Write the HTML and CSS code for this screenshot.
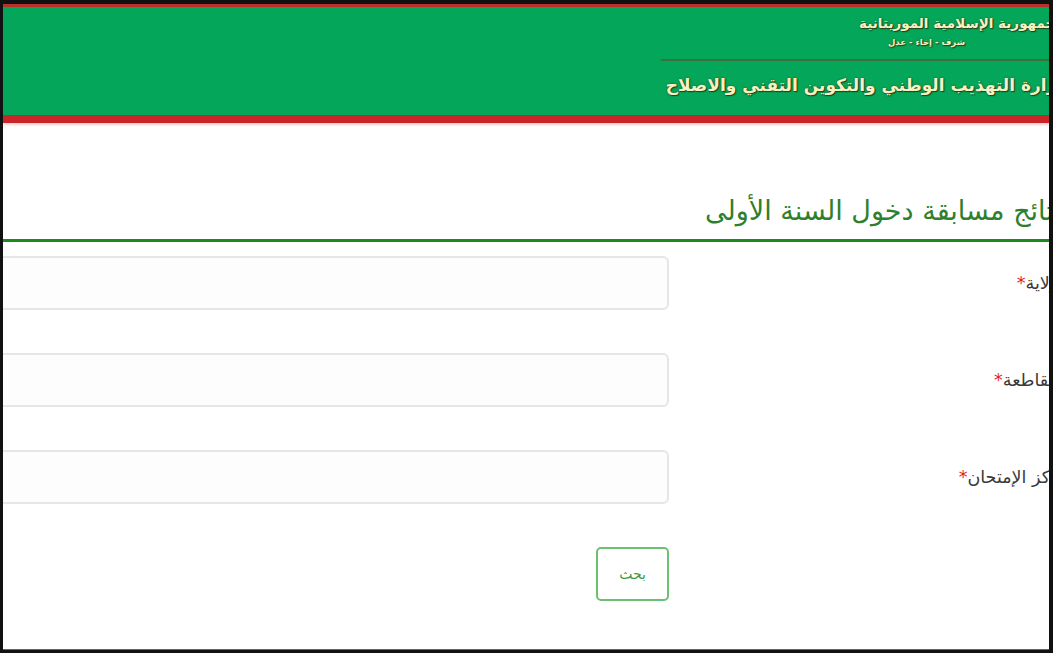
FILE: index.html
```html
<!DOCTYPE html>
<html lang="ar" dir="rtl">
<head>
    <meta charset="UTF-8">
    <meta name="viewport" content="width=device-width, initial-scale=1.0">
    <title>نتائج مسابقة دخول السنة الأولى</title>
    <link rel="stylesheet" href="styles.css">
</head>
<body>
    <div class="screen">
        <div class="header">
            <div class="brand">
                <div class="state">الجمهورية الإسلامية الموريتانية</div>
                <div class="motto">شرف - إخاء - عدل</div>
                <div class="ministry">وزارة التهذيب الوطني والتكوين التقني والاصلاح</div>
            </div>
        </div>

        <div class="content">
            <h2 class="page-title">نتائج مسابقة دخول السنة الأولى</h2>

            <form class="search-form">
                <div class="form-row">
                    <label class="form-label">الولاية<span class="req">*</span></label>
                    <div class="form-field"><input type="text" class="form-input"></div>
                </div>
                <div class="form-row">
                    <label class="form-label">المقاطعة<span class="req">*</span></label>
                    <div class="form-field"><input type="text" class="form-input"></div>
                </div>
                <div class="form-row">
                    <label class="form-label">مركز الإمتحان<span class="req">*</span></label>
                    <div class="form-field"><input type="text" class="form-input"></div>
                </div>
                <div class="form-row form-actions">
                    <div class="form-label"></div>
                    <div class="form-field"><button type="button" class="btn-search">بحث</button></div>
                </div>
            </form>
        </div>
    </div>
</body>
</html>
```

FILE: styles.css
```css
html, body {
    margin: 0;
    height: 100%;
}

body {
    background-color: #111;
    padding: 4px 4px 4px 3px;
    box-sizing: border-box;
    font-family: "DejaVu Sans", "Noto Sans", sans-serif;
}

.screen {
    height: 100%;
    background-color: #fff;
    overflow: hidden;
    box-shadow: 0 1px 0 #666;
}

.header {
    height: 108px;
    background-color: #04a75a;
    border-top: 3px solid #b8322b;
    border-bottom: 8px solid #c9262a;
    box-shadow: 0 2px 2px rgba(220, 60, 60, 0.25);
}

.brand {
    width: 410px;
    margin-right: -22px;
    color: #f6f1c4;
    text-shadow: 0 0 2px #2b4b1c, 1px 1px 1px #233f16;
    font-weight: bold;
}

.state {
    padding: 7px 6px 0 0;
    font-size: 13.5px;
    line-height: 18px;
    text-align: right;
}

.motto {
    padding: 3px 106px 0 0;
    font-size: 8.5px;
    line-height: 14px;
    text-align: right;
}

.ministry {
    margin-top: 11px;
    padding: 9px 4px 0 0;
    border-top: 1px solid #3f6f38;
    box-shadow: 0 -1px 0 rgba(40, 90, 40, 0.4);
    font-size: 17px;
    line-height: 30px;
    white-space: nowrap;
}

.content {
    margin: 0 -22px 0 -60px;
}

.page-title {
    margin: 70px 0 0;
    padding: 0 9px 10px 0;
    border-bottom: 3px solid #1d8a1d;
    color: #2f7f2c;
    font-size: 27px;
    font-weight: normal;
    line-height: 36px;
}

.search-form {
    padding-top: 14px;
}

.form-row {
    display: flex;
    align-items: center;
    margin-bottom: 43px;
}

.form-actions {
    margin-top: 2px;
}

.form-label {
    width: 402px;
    flex-shrink: 0;
    padding-right: 2px;
    box-sizing: border-box;
    color: #3a3a3a;
    font-size: 17.5px;
}

.req {
    color: #e01f1f;
}

.form-field {
    flex: 1;
}

.form-input {
    display: block;
    width: 100%;
    height: 54px;
    box-sizing: border-box;
    border: 2px solid #e6e6e6;
    border-radius: 6px;
    background-color: #fdfdfd;
    outline: none;
}

.btn-search {
    width: 73px;
    height: 54px;
    border: 2px solid #6cc070;
    border-radius: 5px;
    background-color: #fff;
    color: #3f9b46;
    font-family: "DejaVu Sans", sans-serif;
    font-size: 14px;
    cursor: pointer;
}
```
